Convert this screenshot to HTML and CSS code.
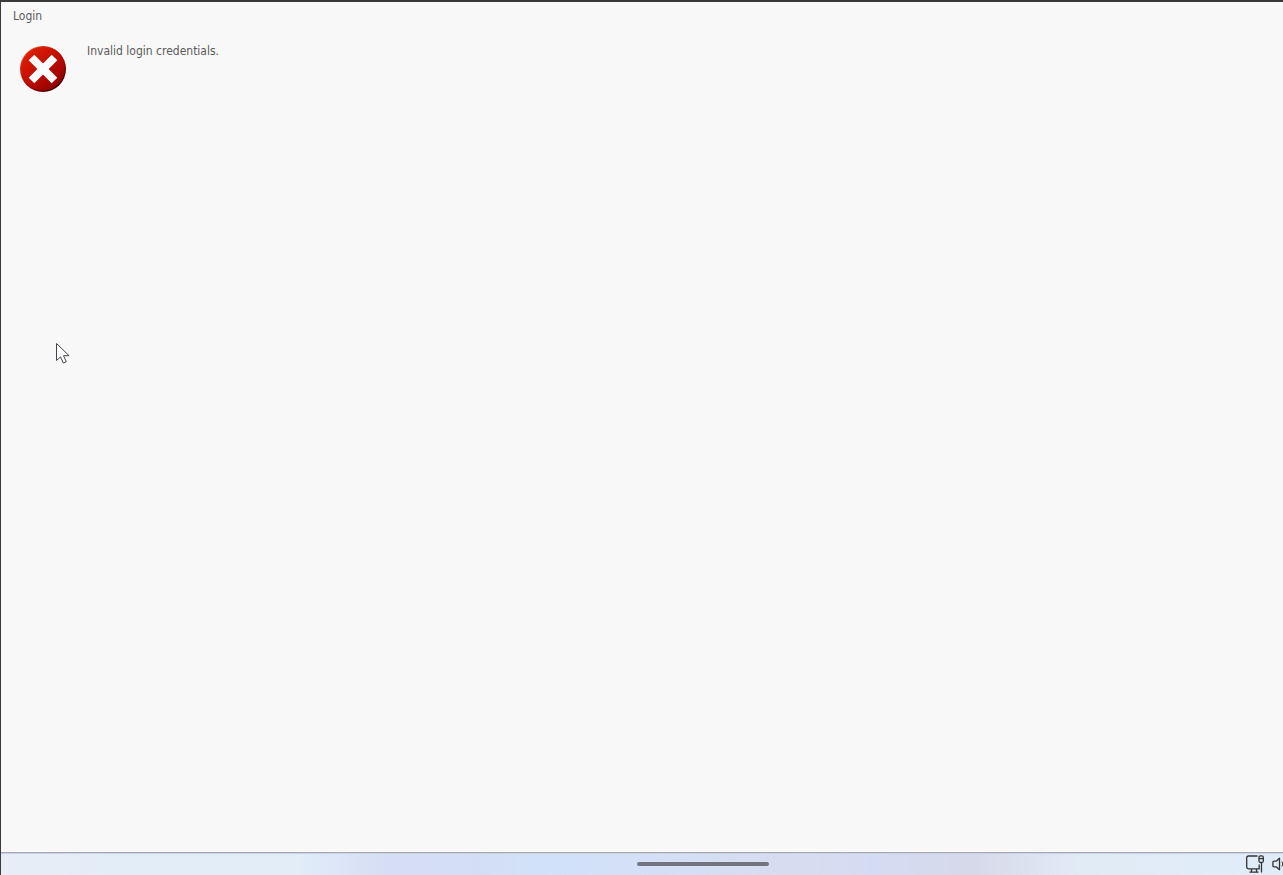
FILE: index.html
```
<!DOCTYPE html>
<html lang="en">
<head>
  <meta charset="UTF-8">
  <meta name="viewport" content="width=device-width, initial-scale=1.0">
  <title>Login</title>
  <link rel="stylesheet" href="styles.css">
</head>
<body>
  <main class="dialog">
    <h1 class="dialog-title">Login</h1>
    <div class="dialog-body" role="alert">
      <svg class="error-icon" viewBox="0 0 48 48" aria-hidden="true">
        <defs>
          <linearGradient id="rim" x1="0.15" y1="0.1" x2="0.85" y2="0.9">
            <stop offset="0" stop-color="#f04a28"/>
            <stop offset="0.35" stop-color="#c81200"/>
            <stop offset="0.7" stop-color="#8c0000"/>
            <stop offset="1" stop-color="#300000"/>
          </linearGradient>
          <linearGradient id="face" x1="0.15" y1="0.1" x2="0.85" y2="0.9">
            <stop offset="0" stop-color="#dc1e06"/>
            <stop offset="0.5" stop-color="#c00e00"/>
            <stop offset="1" stop-color="#900000"/>
          </linearGradient>
        </defs>
        <circle cx="24" cy="24" r="23" fill="url(#rim)"/>
        <circle cx="24" cy="23.7" r="21.8" fill="url(#face)"/>
        <path d="M15.300 9.700L24 18.400l8.700-8.700 5.600 5.600L29.600 24l8.700 8.700-5.600 5.600L24 29.600l-8.700 8.700-5.600-5.600L18.400 24l-8.700-8.700z" fill="#fff"/>
      </svg>
      <p class="message">Invalid login credentials.</p>
    </div>
  </main>

  <footer class="taskbar">
    <span class="handle"></span>
    <div class="tray">
      <svg class="network" viewBox="0 0 18 18" fill="none" stroke="#333" stroke-width="1.300" aria-hidden="true">
        <path d="M11.500 1H2.500Q.7 1 .7 2.800V12Q.7 13.800 2.500 13.800H13.200V9.500"/>
        <path d="M5.500 14v3M10.500 14v3M3.500 17.200h9"/>
        <path d="M15.500 8v9.500"/>
        <rect x="13" y=".8" width="4.300" height="6.700" rx="1.500"/>
        <path d="M13 3.600h4"/>
      </svg>
      <svg class="volume" viewBox="0 0 12 18" fill="none" stroke="#333" stroke-width="1.300" aria-hidden="true">
        <path d="M8.500 3.300v11.400L5.200 11.800H3Q1.900 11.800 1.900 10.700V7.300Q1.900 6.200 3 6.200H5.200z" stroke-linejoin="round"/>
        <path d="M11 6.500q1.400 2.500 0 5" stroke-width="1"/>
      </svg>
    </div>
  </footer>

  <svg class="cursor" viewBox="0 0 15 22" aria-hidden="true">
    <path d="M.5.5v17l4-3.600 2.800 6.100 3-1.300L7.500 12.700h5.600z" fill="#fff" stroke="#44444c" stroke-width="1"/>
  </svg>
</body>
</html>
```
FILE: styles.css
```
* {
  box-sizing: border-box;
}

body {
  margin: 0;
  min-height: 100vh;
  display: flex;
  flex-direction: column;
  border-top: 2px solid #3b393b;
  border-left: 1px solid #3b393b;
  background: #f8f8f8;
  color: #5a5a5a;
  font-family: Tahoma, "DejaVu Sans Condensed", "DejaVu Sans", sans-serif;
  font-size: 12px;
  line-height: 16px;
}

.dialog {
  flex: 1;
  padding: 6px 12px;
}

.dialog-title {
  margin: 0;
  font-size: 12px;
  font-weight: normal;
}

.dialog-body {
  display: flex;
  align-items: flex-start;
  gap: 20px;
  padding: 19px 6px;
}

.error-icon {
  width: 48px;
  height: 48px;
  margin-top: 2px;
}

.message {
  margin: 0;
}

.taskbar {
  display: grid;
  grid-template-columns: 4fr 132px 3fr auto;
  align-items: center;
  height: 24px;
  border-top: 1px solid #fff;
  background: linear-gradient(to right, #e8edf6 0%, #e2edf8 10%, #e2edf8 23%, #d5def5 30%, #d4def4 36%, #d1e1fa 43%, #d5def4 55%, #d8dcef 62%, #d4dcf3 68%, #d6d9e9 76%, #e1ebf6 84%, #e0edf9 100%);
  box-shadow: inset 0 1px #a3a7b3, inset 0 2px #c9d3e4;
}

.handle {
  grid-column: 2;
  height: 4px;
  border-radius: 2px;
  background: #73747f;
}

.tray {
  grid-column: 4;
  display: flex;
  gap: 7px;
}

.network {
  width: 18px;
  height: 18px;
}

.volume {
  width: 12px;
  height: 18px;
}

.cursor {
  position: absolute;
  left: 56px;
  top: 343px;
  width: 15px;
  height: 22px;
}
```
